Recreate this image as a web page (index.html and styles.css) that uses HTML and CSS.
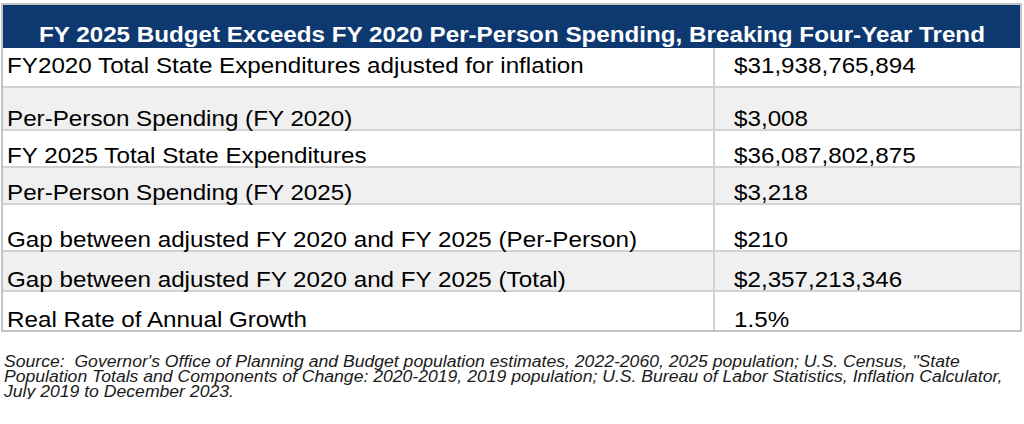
FILE: index.html
```html
<!DOCTYPE html>
<html>
<head>
<meta charset="utf-8">
<link rel="stylesheet" href="styles.css">
</head>
<body>
<div class="table">
  <div class="hdr"><span class="txt">FY 2025 Budget Exceeds FY 2020 Per-Person Spending, Breaking Four-Year Trend</span></div>
  <div class="row r1"><div class="lab"><span class="txt">FY2020 Total State Expenditures adjusted for inflation</span></div><div class="val"><span class="txt">$31,938,765,894</span></div></div>
  <div class="row alt"><div class="lab"><span class="txt">Per-Person Spending (FY 2020)</span></div><div class="val"><span class="txt">$3,008</span></div></div>
  <div class="row r3"><div class="lab"><span class="txt">FY 2025 Total State Expenditures</span></div><div class="val"><span class="txt">$36,087,802,875</span></div></div>
  <div class="row alt r4"><div class="lab"><span class="txt">Per-Person Spending (FY 2025)</span></div><div class="val"><span class="txt">$3,218</span></div></div>
  <div class="row r5"><div class="lab"><span class="txt">Gap between adjusted FY 2020 and FY 2025 (Per-Person)</span></div><div class="val"><span class="txt">$210</span></div></div>
  <div class="row alt r6"><div class="lab"><span class="txt">Gap between adjusted FY 2020 and FY 2025 (Total)</span></div><div class="val"><span class="txt">$2,357,213,346</span></div></div>
  <div class="row last r7"><div class="lab"><span class="txt">Real Rate of Annual Growth</span></div><div class="val"><span class="txt">1.5%</span></div></div>
</div>
<p class="source"><span class="txt">Source:&nbsp; Governor's Office of Planning and Budget population estimates, 2022-2060, 2025 population; U.S. Census, "State<br>Population Totals and Components of Change: 2020-2019, 2019 population; U.S. Bureau of Labor Statistics, Inflation Calculator,<br>July 2019 to December 2023.</span></p>
</body>
</html>
```
FILE: styles.css
```css
html, body {
  margin: 0;
  padding: 0;
  background: #ffffff;
}
body {
  font-family: "Liberation Sans", Arial, sans-serif;
  color: #000;
}
.txt {
  display: inline-block;
  transform: scaleX(1.1);
  transform-origin: left bottom;
  white-space: nowrap;
}
.table {
  width: 1021px;
  margin: 3px 0 0 1px;
  border: 2px solid #c4c4c4;
  box-sizing: border-box;
}
.hdr {
  height: 43px;
  box-sizing: border-box;
  background: #0e3970;
  color: #fff;
  font-weight: bold;
  font-size: 22px;
  line-height: 22px;
  display: flex;
  align-items: flex-end;
  justify-content: center;
  padding-bottom: 2px;
}
.hdr .txt { transform-origin: center bottom; }
.row {
  display: grid;
  grid-template-columns: 712px 1fr;
  height: 43px;
  box-sizing: border-box;
  border-bottom: 2px solid #d2d2d2;
  font-size: 22px;
  line-height: 20px;
  background: #fff;
}
.row.alt { background: #f0f0f0; }
.row.last { border-bottom: none; }
.lab, .val {
  display: flex;
  align-items: flex-end;
  padding-bottom: 0;
}
.lab {
  padding-left: 4px;
  border-right: 2px solid #d2d2d2;
}
.val { padding-left: 19px; }
.r1 { height: 40px; }
.r1 .lab, .r1 .val { padding-bottom: 10px; }
.r3 { height: 37px; }
.r4 { height: 37px; }
.r5 { height: 47px; }
.r6 { height: 40px; }
.r7 { height: 38px; }
.source {
  margin: 22px 0 0 4px;
  font-style: italic;
  font-size: 16px;
  line-height: 15px;
  color: #1a1a1a;
}
```
